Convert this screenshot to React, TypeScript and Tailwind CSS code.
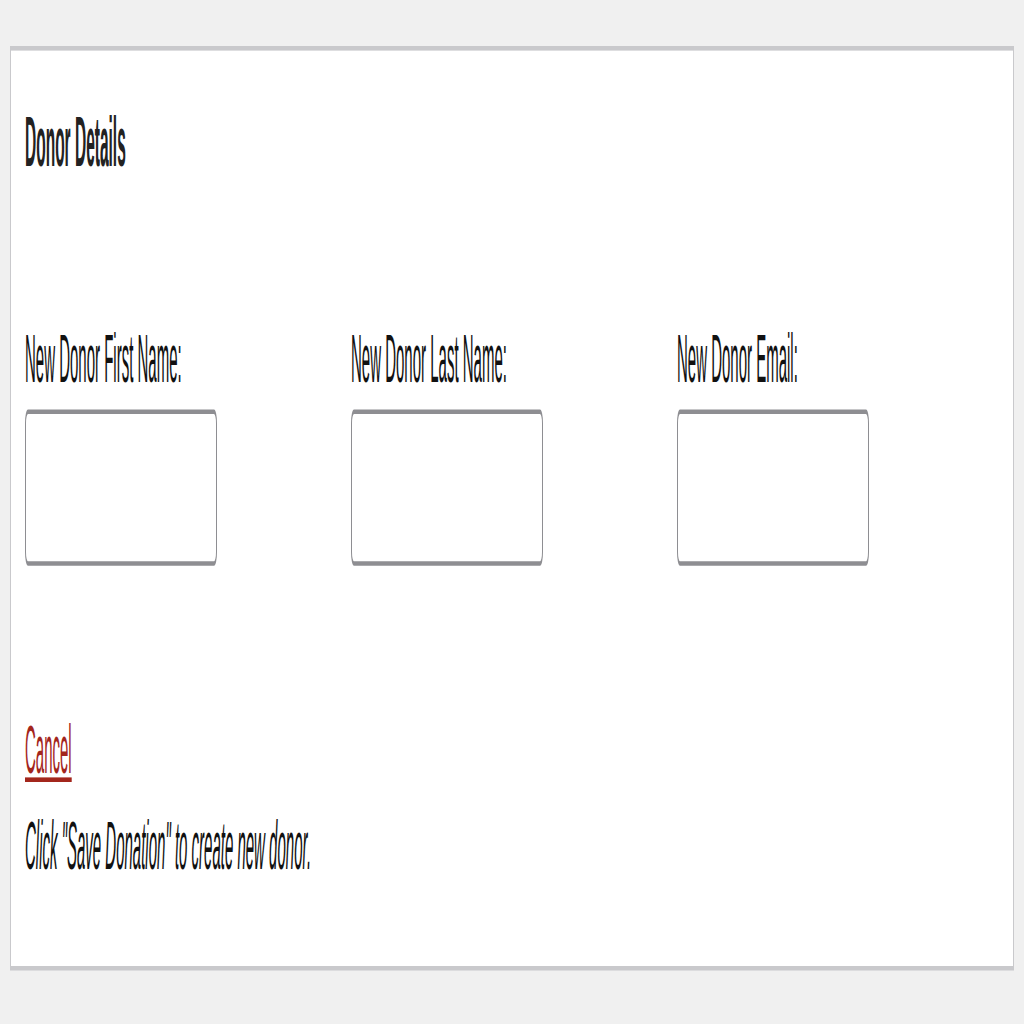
export default function App() {
  const fields = ['New Donor First Name:', 'New Donor Last Name:', 'New Donor Email:']

  return (
    <div className="h-[1024px] overflow-hidden bg-[#f0f0f0] font-['Liberation_Sans',Arial,sans-serif]">
      {/* the whole form is drawn squeezed, then stretched tall like the screenshot */}
      <div className="h-[223px] origin-top scale-y-[4.6] px-[10px] pt-[10px]">
        <div className="border border-[#c9c9cc] bg-white pl-[14px] pt-[10px] pb-[17px]">
          <h2 className="text-[15.5px] leading-[20px] font-bold text-[#222]">Donor Details</h2>

          <div className="mt-[28px] grid grid-cols-[326px_326px_326px]">
            {fields.map(label => (
              <div key={label} className="flex flex-col">
                <label className="text-[15px] leading-[18px] text-[#111]">{label}</label>
                <input
                  type="text"
                  className="mt-[1.5px] h-[34px] w-[192px] rounded-[3px] border border-[#8e8e92] bg-white outline-none"
                />
              </div>
            ))}
          </div>

          <a href="#" className="mt-[31.3px] block w-fit text-[15px] leading-[18px] text-[#a3261c] underline">
            Cancel
          </a>

          <p className="mt-[3.5px] text-[15px] leading-[18px] italic text-[#111]">
            Click "Save Donation" to create new donor.
          </p>
        </div>
      </div>
    </div>
  )
}
